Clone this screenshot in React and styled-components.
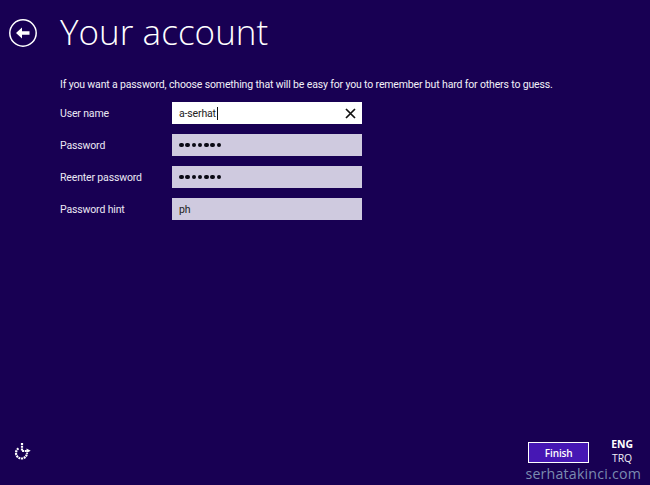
import React from "react";
import styled, { createGlobalStyle } from "styled-components";

const GlobalStyle = createGlobalStyle`
  html, body {
    margin: 0;
    padding: 0;
    background: #180053;
  }
`;

const Page = styled.div`
  position: relative;
  display: flex;
  flex-direction: column;
  width: 650px;
  height: 485px;
  overflow: hidden;
  background: #180053;
  color: #fff;
  font-family: "Open Sans", "Noto Sans", sans-serif;
`;

const Header = styled.div`
  display: flex;
  align-items: center;
  height: 65px;
  padding-left: 8px;
`;

const BackButton = styled.svg`
  width: 30px;
  height: 30px;
  margin-right: 22px;
  flex: none;
`;

const Title = styled.h1`
  margin: 0 0 2px;
  font-size: 35px;
  font-weight: 300;
  line-height: 63px;
  letter-spacing: 0.05px;
`;

const Content = styled.div`
  display: flex;
  flex-direction: column;
  padding: 12px 0 0 60px;
  font-family: "Roboto", "Open Sans", sans-serif;
  letter-spacing: -0.15px;
`;

const Intro = styled.p`
  margin: 0 0 10px;
  font-size: 10.5px;
  line-height: 15px;
  color: #f2f0f8;
`;

const Form = styled.div`
  display: flex;
  flex-direction: column;
  gap: 10px;
`;

const Row = styled.div`
  display: flex;
  align-items: center;
  height: 22px;
`;

const Label = styled.div`
  width: 112px;
  font-size: 10.5px;
  color: #ebe8f3;
`;

const Field = styled.div`
  display: flex;
  align-items: center;
  justify-content: space-between;
  box-sizing: border-box;
  width: 190px;
  height: 22px;
  padding: 0 6px 0 7px;
  background: ${(p) => (p.$active ? "#ffffff" : "#cfcadf")};
  color: #222;
  font-size: 10.5px;
`;

const Caret = styled.span`
  display: inline-block;
  width: 1px;
  height: 13px;
  margin-left: 1px;
  vertical-align: -3px;
  background: #111;
`;

const Dots = styled.div`
  display: flex;
  gap: 1.7px;
`;

const Dot = styled.span`
  width: 4.6px;
  height: 4.6px;
  border-radius: 50%;
  background: #0a0a14;
`;

const ClearIcon = styled.svg`
  width: 11px;
  height: 11px;
  flex: none;
`;

const Footer = styled.div`
  display: flex;
  align-items: flex-start;
  justify-content: space-between;
  margin-top: auto;
  padding: 0 17px 20px 14px;
`;

const EaseIcon = styled.svg`
  width: 18px;
  height: 19px;
  margin-top: 1px;
`;

const FooterRight = styled.div`
  display: flex;
  align-items: flex-start;
  gap: 22px;
`;

const FinishButton = styled.button`
  box-sizing: border-box;
  width: 61px;
  height: 21px;
  margin-top: 1px;
  padding: 0;
  border: 1px solid #fff;
  background: #4617b4;
  color: #fff;
  font-family: inherit;
  font-size: 10px;
  font-weight: 600;
  letter-spacing: -0.1px;
`;

const Languages = styled.div`
  display: flex;
  flex-direction: column;
  align-items: center;
  margin-top: -4px;
  font-size: 10.4px;
  line-height: 14px;
`;

const ActiveLanguage = styled.span`
  font-weight: 700;
`;

const InactiveLanguage = styled.span`
  font-weight: 400;
  color: #f0eef6;
`;

const Watermark = styled.div`
  position: absolute;
  right: 9px;
  bottom: 1px;
  font-size: 14.2px;
  line-height: 20px;
  letter-spacing: 0.2px;
  color: #7b8bb0;
`;

const PasswordDots = () => (
  <Dots>
    {Array.from({ length: 7 }).map((_, i) => (
      <Dot key={i} />
    ))}
  </Dots>
);

const App = () => {
  return (
    <Page>
      <GlobalStyle />
      <Header>
        <BackButton viewBox="0 0 30 30">
          <circle cx="15" cy="15" r="13.2" fill="none" stroke="#fff" strokeWidth="1.5" />
          <path d="M8 15 L14 9.5 V13.3 H21.5 V16.7 H14 V20.5 Z" fill="#fff" />
        </BackButton>
        <Title>Your account</Title>
      </Header>
      <Content>
        <Intro>
          If you want a password, choose something that will be easy for you to remember but hard for others to guess.
        </Intro>
        <Form>
          <Row>
            <Label>User name</Label>
            <Field $active>
              <span>
                a-serhat
                <Caret />
              </span>
              <ClearIcon viewBox="0 0 11 11">
                <path d="M1 1 L10 10 M10 1 L1 10" stroke="#111" strokeWidth="1.7" />
              </ClearIcon>
            </Field>
          </Row>
          <Row>
            <Label>Password</Label>
            <Field>
              <PasswordDots />
            </Field>
          </Row>
          <Row>
            <Label>Reenter password</Label>
            <Field>
              <PasswordDots />
            </Field>
          </Row>
          <Row>
            <Label>Password hint</Label>
            <Field>ph</Field>
          </Row>
        </Form>
      </Content>
      <Footer>
        <EaseIcon viewBox="0 0 18 19">
          <path
            d="M8 1 V9 H13 M4.5 6.4 A5.5 5.5 0 1 0 13 11"
            fill="none"
            stroke="#fff"
            strokeWidth="2.2"
            strokeDasharray="2 0.7"
          />
          <path d="M12.5 6.6 L16.7 8.8 L12.5 11 Z" fill="#fff" />
        </EaseIcon>
        <FooterRight>
          <FinishButton>Finish</FinishButton>
          <Languages>
            <ActiveLanguage>ENG</ActiveLanguage>
            <InactiveLanguage>TRQ</InactiveLanguage>
          </Languages>
        </FooterRight>
      </Footer>
      <Watermark>serhatakinci.com</Watermark>
    </Page>
  );
};

export default App;
